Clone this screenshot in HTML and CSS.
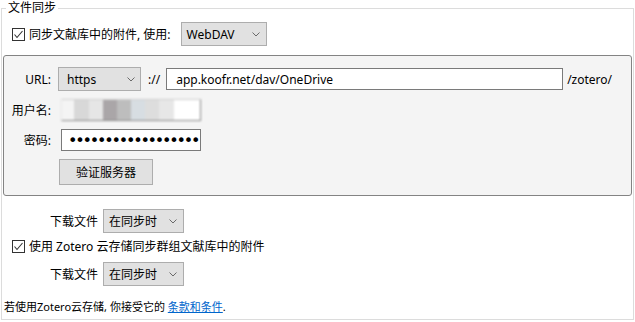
FILE: index.html
```html
<!DOCTYPE html>
<html lang="zh-CN">
<head>
    <meta charset="UTF-8">
    <title>文件同步</title>
    <link rel="stylesheet" href="styles.css">
</head>
<body>

    <fieldset class="sync">
        <legend>文件同步</legend>

        <div class="option-row">
            <label class="check">
                <span class="box"><svg width="11" height="11" viewBox="0 0 11 11"><polyline points="1.5,5.5 4,8.5 9.5,2" fill="none" stroke="#333" stroke-width="1.1"/></svg></span>
                同步文献库中的附件, 使用:
            </label>
            <div class="dropdown protocol">
                <span>WebDAV</span>
                <svg class="chevron" width="8" height="5" viewBox="0 0 8 5"><polyline points="0.5,0.5 4,4 7.5,0.5" fill="none" stroke="#6a6a6a" stroke-width="1"/></svg>
            </div>
        </div>

        <div class="server-box">
            <div class="server-grid">
                <span class="field-label">URL:</span>
                <div class="url-line">
                    <div class="dropdown scheme">
                        <span>https</span>
                        <svg class="chevron" width="8" height="5" viewBox="0 0 8 5"><polyline points="0.5,0.5 4,4 7.5,0.5" fill="none" stroke="#6a6a6a" stroke-width="1"/></svg>
                    </div>
                    <span class="sep">://</span>
                    <input type="text" class="text-input url-input" value="app.koofr.net/dav/OneDrive">
                    <span class="suffix">/zotero/</span>
                </div>

                <span class="field-label">用户名:</span>
                <div class="text-input blurred"></div>

                <span class="field-label">密码:</span>
                <input type="password" class="text-input password" value="abcdefghijklmnopqrst">

                <span></span>
                <button type="button" class="verify">验证服务器</button>
            </div>
        </div>

        <div class="download-row">
            <span class="download-label">下载文件</span>
            <div class="dropdown when">
                <span>在同步时</span>
                <svg class="chevron" width="8" height="5" viewBox="0 0 8 5"><polyline points="0.5,0.5 4,4 7.5,0.5" fill="none" stroke="#6a6a6a" stroke-width="1"/></svg>
            </div>
        </div>

        <div class="option-row group-row">
            <label class="check">
                <span class="box"><svg width="11" height="11" viewBox="0 0 11 11"><polyline points="1.5,5.5 4,8.5 9.5,2" fill="none" stroke="#333" stroke-width="1.1"/></svg></span>
                使用 Zotero 云存储同步群组文献库中的附件
            </label>
        </div>

        <div class="download-row second">
            <span class="download-label">下载文件</span>
            <div class="dropdown when">
                <span>在同步时</span>
                <svg class="chevron" width="8" height="5" viewBox="0 0 8 5"><polyline points="0.5,0.5 4,4 7.5,0.5" fill="none" stroke="#6a6a6a" stroke-width="1"/></svg>
            </div>
        </div>

        <p class="terms">若使用Zotero云存储, 你接受它的 <a href="#">条款和条件</a>.</p>
    </fieldset>

</body>
</html>
```

FILE: styles.css
```css
body {
    margin: 0;
    background: #fff;
    font-family: "Noto Sans", "Noto Sans CJK SC", sans-serif;
    font-size: 12px;
    color: #000;
}

.sync {
    margin: 0 0 0 1px;
    width: 633px;
    padding: 6px 1px 4px 1px;
    border: 1px solid #dcdcdc;
    box-sizing: border-box;
    min-width: 0;
}

.sync legend {
    margin-left: 3px;
    padding: 0 2px;
    line-height: 16px;
}

.option-row {
    display: flex;
    align-items: center;
    padding-left: 9px;
    height: 24px;
}

.check {
    display: flex;
    align-items: center;
    gap: 4px;
    margin-right: 10px;
}

.box {
    width: 11px;
    height: 11px;
    border: 1px solid #333;
    background: #fff;
    display: flex;
}

.dropdown {
    display: flex;
    align-items: center;
    justify-content: space-between;
    height: 24px;
    box-sizing: border-box;
    background: #e1e1e1;
    border: 1px solid #adadad;
    padding: 0 6px 0 5px;
}

.protocol {
    width: 86px;
}

.scheme {
    width: 83px;
    padding-left: 8px;
    padding-right: 5px;
}

.when {
    width: 81px;
}

.server-box {
    margin-top: 9px;
    background: #f4f4f4;
    border: 1px solid #838383;
    border-radius: 3px;
    padding: 11px 0 10px 0;
}

.server-grid {
    display: grid;
    grid-template-columns: 47px 1fr;
    column-gap: 7px;
    row-gap: 8px;
    align-items: center;
}

.field-label {
    text-align: right;
}

.url-line {
    display: flex;
    align-items: center;
}

.sep {
    margin: 0 6px 0 7px;
}

.text-input {
    height: 22px;
    box-sizing: border-box;
    border: 1px solid #7a7a7a;
    background: #fff;
    font: inherit;
    padding: 0 7px;
    margin: 0;
    outline: none;
}

.url-input {
    width: 397px;
    padding-left: 9px;
}

.suffix {
    margin-left: 4px;
}

.blurred {
    width: 140px;
    margin-left: 3px;
    border-color: #d0d0d0 #888 #888 #e8e8e8;
    background: linear-gradient(to right, #f4f4f4 0, #f4f4f4 12px, #d8d8d8 12px, #d8d8d8 27px, #e6e6e6 27px, #e6e6e6 41px, #aaa6a8 41px, #aaa6a8 55px, #bdbdbd 55px, #bdbdbd 69px, #d7dde2 69px, #d7dde2 83px, #dddddd 83px, #dddddd 97px, #e7e7e7 97px, #e7e7e7 112px, #fff 112px);
    filter: blur(1px);
}

.password {
    width: 140px;
    margin-left: 3px;
    font-family: "DejaVu Sans", sans-serif;
    font-size: 16px;
    letter-spacing: -2.2px;
    padding-left: 6px;
    padding-right: 0;
}

.verify {
    justify-self: start;
    margin-left: 1px;
    width: 94px;
    height: 26px;
    background: #e1e1e1;
    border: 1px solid #adadad;
    font: inherit;
    color: #000;
    padding: 0;
}

.download-row {
    display: flex;
    align-items: center;
    gap: 5px;
    padding-left: 47px;
    margin-top: 13px;
}

.download-row.second {
    margin-top: 7px;
}

.group-row {
    margin-top: 4px;
    height: 18px;
}

.terms {
    margin: 13px 0 0 1px;
    font-size: 11px;
    line-height: 16px;
}

.terms a {
    color: #0066cc;
}
```
